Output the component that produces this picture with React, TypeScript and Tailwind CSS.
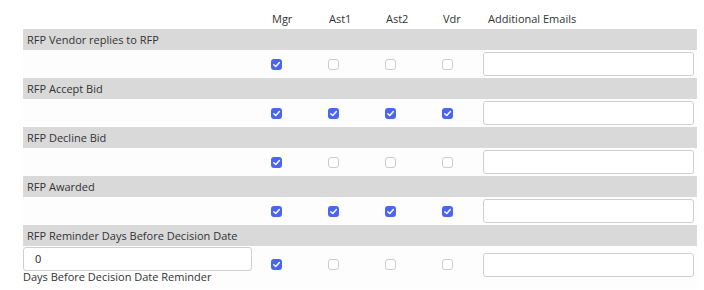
import React from 'react'

type Row = {
  title: string
  checks: boolean[]
  days?: boolean
}

const rows: Row[] = [
  { title: 'RFP Vendor replies to RFP', checks: [true, false, false, false] },
  { title: 'RFP Accept Bid', checks: [true, true, true, true] },
  { title: 'RFP Decline Bid', checks: [true, false, false, false] },
  { title: 'RFP Awarded', checks: [true, true, true, true] },
  { title: 'RFP Reminder Days Before Decision Date', checks: [true, false, false, false], days: true },
]

const colW = ['w-[57px]', 'w-[57px]', 'w-[57px]', 'w-[38px]']

function Box({ checked }: { checked: boolean }) {
  if (checked) {
    return (
      <span className="inline-flex w-[11px] h-[11px] rounded-[3px] bg-[#4a65f0] items-center justify-center">
        <svg width="9" height="9" viewBox="0 0 10 10">
          <path d="M2 5.2 L4.2 7.2 L8.2 2.8" fill="none" stroke="#fff" strokeWidth="1.6" strokeLinecap="round" strokeLinejoin="round" />
        </svg>
      </span>
    )
  }
  return <span className="inline-block w-[11px] h-[11px] rounded-[3px] border border-[#c9cbd1] bg-white" />
}

export default function App() {
  return (
    <div className="w-[704px] h-[290px] bg-white pl-[23px] pt-[13px] text-[#333] text-[11px]" style={{ fontFamily: '"Open Sans", "Noto Sans", sans-serif' }}>
      <table className="w-[674px] table-fixed border-collapse">
        <thead>
          <tr className="h-[16px] leading-none">
            <th className="w-[248px]" />
            {['Mgr', 'Ast1', 'Ast2', 'Vdr'].map((h, i) => (
              <th key={h} className={`${colW[i]} text-left font-normal pl-[1px] align-top`}>{h}</th>
            ))}
            <th className="text-left font-normal pl-[8px] align-top">Additional Emails</th>
          </tr>
        </thead>
        <tbody>
          {rows.map(r => (
            <React.Fragment key={r.title}>
              <tr className="bg-[#d9d9d9] h-[21px]">
                <td colSpan={6} className="pl-[4px] leading-none">{r.title}</td>
              </tr>
              <tr className={r.days ? 'h-[43px] bg-[#fdfdfd]' : 'h-[28px] bg-[#fdfdfd]'}>
                <td className={r.days ? 'align-top pt-[1px]' : ''}>
                  {r.days && (
                    <div>
                      <div className="w-[229px] h-[24px] border border-[#cfcfcf] rounded-[3px] bg-white pl-[11px] flex items-center text-[#222]">0</div>
                      <div className="mt-[0px] leading-none whitespace-nowrap">Days Before Decision Date Reminder</div>
                    </div>
                  )}
                </td>
                {r.checks.map((c, i) => (
                  <td key={i} className={r.days ? 'align-top pt-[13px]' : 'align-middle'}>
                    <div className="flex">
                      <Box checked={c} />
                    </div>
                  </td>
                ))}
                <td className={r.days ? 'align-top pt-[7px] pl-[3px]' : 'align-middle pl-[3px]'}>
                  <div className="w-[211px] h-[24px] border border-[#cfcfcf] rounded-[3px] bg-white" />
                </td>
              </tr>
            </React.Fragment>
          ))}
        </tbody>
      </table>
    </div>
  )
}
